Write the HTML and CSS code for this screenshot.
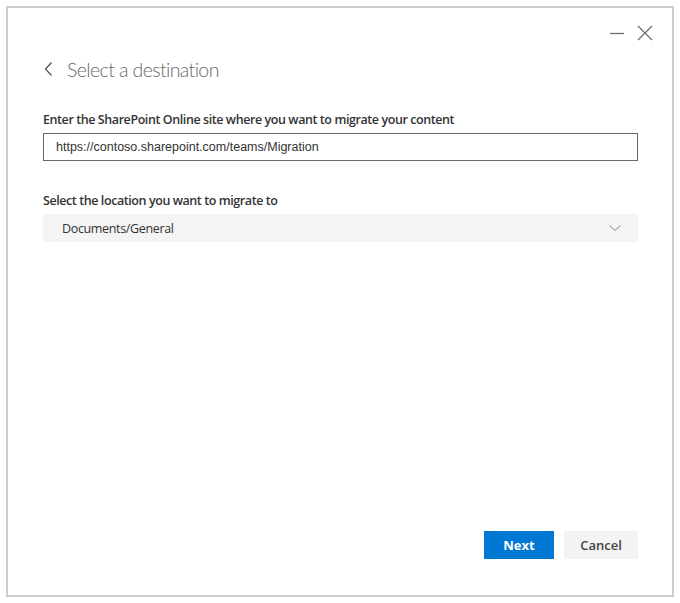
FILE: index.html
```html
<!DOCTYPE html>
<html>
<head>
<meta charset="utf-8">
<link rel="stylesheet" href="styles.css">
</head>
<body>
<div class="dialog">
  <div class="titlebar">
    <span class="win-btn min"><svg width="16" height="16" viewBox="0 0 16 16"><path d="M1 8.5H15" stroke="#6e6e6e" stroke-width="1.3"/></svg></span>
    <span class="win-btn close"><svg width="16" height="16" viewBox="0 0 16 16"><path d="M1 1L15 15M15 1L1 15" stroke="#6e6e6e" stroke-width="1.3"/></svg></span>
  </div>
  <div class="header">
    <svg class="back" width="9" height="16" viewBox="0 0 9 16"><path d="M7.5 1.5L1.5 8L7.5 14.5" fill="none" stroke="#555" stroke-width="1.3"/></svg>
    <h1 class="title">Select a destination</h1>
  </div>
  <div class="field">
    <label class="label">Enter the SharePoint Online site where you want to migrate your content</label>
    <div class="input">https://contoso.sharepoint.com/teams/Migration</div>
  </div>
  <div class="field second">
    <label class="label">Select the location you want to migrate to</label>
    <div class="select">
      <span>Documents/General</span>
      <svg width="12" height="8" viewBox="0 0 12 8"><path d="M0.5 1.5L6 6.5L11.5 1.5" fill="none" stroke="#8a8a8a" stroke-width="1"/></svg>
    </div>
  </div>
  <div class="spacer"></div>
  <div class="footer">
    <button class="btn primary">Next</button>
    <button class="btn secondary">Cancel</button>
  </div>
</div>
</body>
</html>
```
FILE: styles.css
```css
html, body {
  margin: 0;
  padding: 0;
  background: #ffffff;
}
body {
  padding: 6px;
  font-family: "Open Sans", "Noto Sans", sans-serif;
}
.dialog {
  box-sizing: border-box;
  width: 668px;
  height: 591px;
  border: 2px solid #cdcdcd;
  display: flex;
  flex-direction: column;
  padding: 0 34px 36px 35px;
}
.titlebar {
  display: flex;
  justify-content: flex-end;
  gap: 12px;
  padding-top: 17px;
  margin-right: -15px;
  height: 18px;
}
.win-btn {
  width: 16px;
  height: 16px;
  display: flex;
}
.header {
  display: flex;
  align-items: center;
  margin-top: 11px;
  height: 30px;
}
.back {
  margin-left: 1px;
  margin-right: 14px;
}
.title {
  margin: 0;
  font-family: "Lato", "Open Sans", sans-serif;
  font-size: 19.5px;
  font-weight: 300;
  letter-spacing: -0.6px;
  color: #686868;
}
.field {
  display: flex;
  flex-direction: column;
  margin-top: 26px;
}
.field.second {
  margin-top: 30px;
}
.label {
  font-size: 12.5px;
  font-weight: 600;
  color: #333;
  height: 19px;
  line-height: 19px;
  letter-spacing: -0.42px;
  margin-bottom: 4px;
}
.input {
  box-sizing: border-box;
  height: 28px;
  border: 1px solid #6a6a6a;
  padding: 0 12px;
  font-family: "Liberation Sans", Arial, sans-serif;
  font-size: 12.5px;
  color: #333;
  line-height: 26px;
}
.select {
  box-sizing: border-box;
  height: 28px;
  background: #f4f4f4;
  padding: 0 17px 0 19px;
  display: flex;
  align-items: center;
  justify-content: space-between;
  font-size: 12.5px;
  letter-spacing: -0.35px;
  color: #333;
}
.spacer {
  flex: 1;
}
.footer {
  display: flex;
  justify-content: flex-end;
  gap: 10px;
}
.btn {
  height: 28px;
  border: none;
  font-family: "Open Sans", "Noto Sans", sans-serif;
  font-size: 13px;
  font-weight: 700;
  padding: 0;
}
.primary {
  width: 70px;
  background: #0078d4;
  color: #fff;
}
.secondary {
  width: 74px;
  background: #f3f3f3;
  color: #444;
  font-weight: 600;
}
```
